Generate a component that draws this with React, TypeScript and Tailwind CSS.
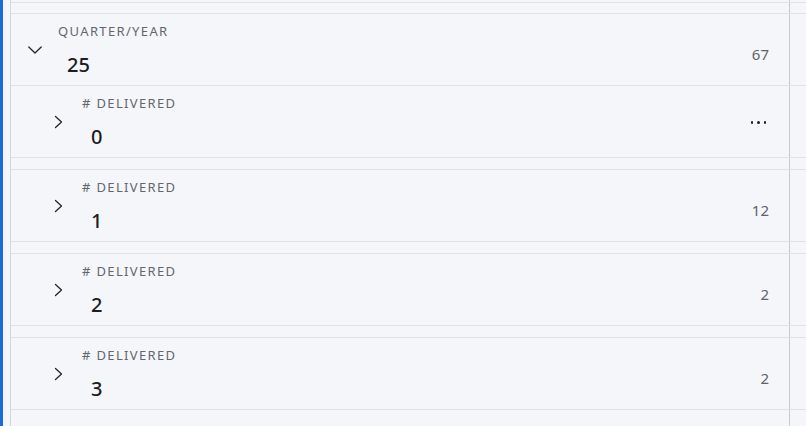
import React from 'react';

interface RowProps {
  depth: number;
  label: string;
  value: string;
  count?: string;
  expanded?: boolean;
  menu?: boolean;
}

function Chevron({ expanded }: { expanded?: boolean }) {
  return (
    <svg width="16" height="16" viewBox="0 0 16 16" fill="none" stroke="#23262b" strokeWidth="1.3" strokeLinecap="round" strokeLinejoin="round">
      {expanded ? <polyline points="1.8,5 8,11 14.2,5" /> : <polyline points="4.5,2.5 10.5,8 4.5,13.5" />}
    </svg>
  );
}

function Row({ depth, label, value, count, expanded, menu }: RowProps) {
  return (
    <div className="flex h-[72px] border-b border-[#dfe1e5]">
      <div className={`flex flex-1 items-center border-r border-[#c8c9cd] pr-[20px] ${depth === 0 ? 'pl-[16px]' : 'pl-[40px]'}`}>
        <div className="flex h-4 w-4 items-center justify-center">
          <Chevron expanded={expanded} />
        </div>
        <div className="ml-[15px] flex flex-col self-stretch pt-[9px]">
          <span className="text-[13px] leading-[16px] tracking-[1.35px] text-[#62666d]">{label}</span>
          <span className="ml-[9px] mt-[14px] text-[20px] font-medium leading-[24px] text-[#1b1d21]">{value}</span>
        </div>
        {menu ? (
          <div className="ml-auto mr-[3px] mt-[2px] flex gap-[4px]">
            <span className="h-[2.5px] w-[2.5px] rounded-full bg-[#1f2125]" />
            <span className="h-[2.5px] w-[2.5px] rounded-full bg-[#1f2125]" />
            <span className="h-[2.5px] w-[2.5px] rounded-full bg-[#1f2125]" />
          </div>
        ) : (
          <div className="ml-auto mt-[30px] self-start text-[15px] leading-[20px] text-[#5f636a]">{count}</div>
        )}
      </div>
      <div className="w-[16px]" />
    </div>
  );
}

function Spacer({ h }: { h: string }) {
  return (
    <div className={`flex ${h} border-b border-[#dfe1e5]`}>
      <div className="flex-1 border-r border-[#c8c9cd]" />
      <div className="w-[16px]" />
    </div>
  );
}

export default function App() {
  return (
    <div
      className="flex h-[426px] w-[806px] overflow-hidden bg-[#f5f6fa]"
      style={{ fontFamily: '"Noto Sans", "Open Sans", sans-serif' }}
    >
      <div className="w-[3px] bg-[#1a6cd3]" />
      <div className="w-[7px]" />
      <div className="flex flex-1 flex-col border-l border-[#d3d5da]">
        <Spacer h="h-[3px]" />
        <Spacer h="h-[11px]" />
        <Row depth={0} label="QUARTER/YEAR" value="25" count="67" expanded />
        <Row depth={1} label="# DELIVERED" value="0" menu />
        <Spacer h="h-[12px]" />
        <Row depth={1} label="# DELIVERED" value="1" count="12" />
        <Spacer h="h-[12px]" />
        <Row depth={1} label="# DELIVERED" value="2" count="2" />
        <Spacer h="h-[12px]" />
        <Row depth={1} label="# DELIVERED" value="3" count="2" />
        <div className="flex flex-1">
          <div className="flex-1 border-r border-[#c8c9cd]" />
          <div className="w-[16px]" />
        </div>
      </div>
    </div>
  );
}
